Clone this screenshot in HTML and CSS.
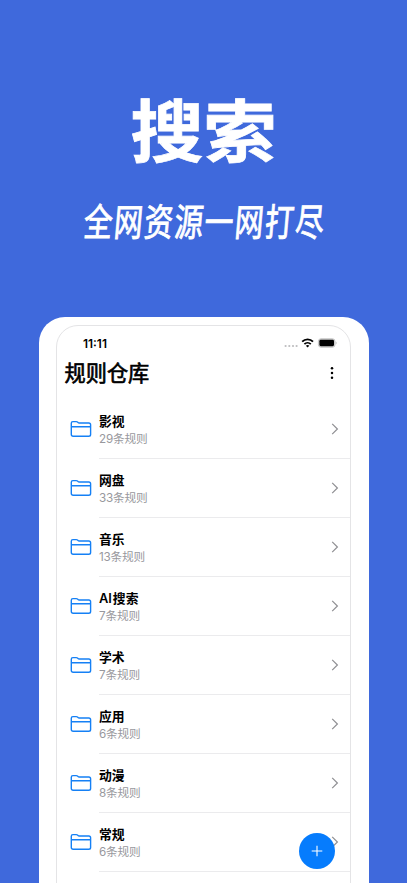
FILE: index.html
```html
<!DOCTYPE html>
<html lang="zh-CN">
<head>
<meta charset="utf-8">
<title>搜索</title>
<link rel="stylesheet" href="styles.css">
</head>
<body>
<header class="hero">
  <h1 class="hero-title">搜索</h1>
  <p class="hero-tagline"><span>全网资源一网打尽</span></p>
</header>
<main class="device">
  <div class="screen">
    <div class="status">
      <span class="time">11:11</span>
      <svg class="status-icons" width="54" height="12" viewBox="0 0 54 12">
        <g fill="#bdbdbf"><circle cx="2.6" cy="9" r="1.1"/><circle cx="6.3" cy="9" r="1.1"/><circle cx="10" cy="9" r="1.1"/><circle cx="13.6" cy="9" r="1.1"/></g>
        <g fill="none" stroke="#000" stroke-width="1.8"><path d="M19.2 4.7a7.3 7.3 0 0 1 10.8 0"/><path d="M21.4 7.2a4.6 4.6 0 0 1 6.4 0"/></g>
        <path d="M22.9 8.7a2.5 2.5 0 0 1 3.4 0l-1.7 1.7z"/>
        <rect x="35.4" y="1.8" width="16.6" height="8.4" rx="2.6" fill="#d4d4d4" stroke="#c4c4c4"/>
        <rect x="36.4" y="2.8" width="14.6" height="6.4" rx="1.4"/>
        <path d="M52.9 4.6q1.2 1.5 0 3z" fill="#a8a8a8"/>
      </svg>
    </div>
    <div class="heading">
      <h2>规则仓库</h2>
      <svg width="4" height="14" viewBox="0 0 4 14"><circle cx="2" cy="2.3" r="1.25"/><circle cx="2" cy="7" r="1.25"/><circle cx="2" cy="11.7" r="1.25"/></svg>
    </div>
    <ul class="list" id="list"></ul>
  </div>
</main>
<button class="add" aria-label="添加"><svg width="12" height="12" viewBox="0 0 12 12"><path d="M6 .7v10.6M.7 6h10.6" stroke="#fff" stroke-width="1.1"/></svg></button>
<script src="app.js"></script>
</body>
</html>
```
FILE: styles.css
```css
* { box-sizing: border-box; }
body {
  margin: 0;
  height: 883px;
  overflow: hidden;
  position: relative;
  display: flex;
  flex-direction: column;
  background: #3f69dc;
  color: #000;
  font-family: Inter, "Noto Sans CJK SC", sans-serif;
}
h1, h2, p, ul { margin: 0; padding: 0; }
.hero {
  height: 317px;
  flex: none;
  padding-top: 88px;
  color: #fff;
  text-align: center;
  font-family: "Noto Sans CJK SC", sans-serif;
}
.hero-title {
  font-size: 73px;
  line-height: 80px;
  font-weight: 700;
  -webkit-text-stroke: .8px #fff;
  transform: translateY(-1px) scaleY(.94);
}
.hero-tagline {
  display: flex;
  justify-content: center;
  margin-top: 28px;
  font-size: 38px;
  line-height: 48px;
  font-weight: 400;
  letter-spacing: 2px;
  -webkit-text-stroke: .9px #fff;
  white-space: nowrap;
}
.hero-tagline span { transform: translateX(2px) skewX(-5deg) scaleX(.755); }
.device {
  flex: none;
  width: 330.5px;
  height: 600px;
  margin-left: 38.5px;
  padding: 8px 18px 0 17.5px;
  border-radius: 26px 26px 0 0;
  background: #fff;
}
.screen {
  height: 600px;
  border: 1px solid #e4e4e6;
  border-radius: 22px 22px 0 0;
}
.status {
  height: 33px;
  padding: 0 13px 0 26px;
  display: flex;
  align-items: center;
  justify-content: space-between;
}
.time { font-size: 11.9px; line-height: 16px; font-weight: 600; padding-top: 2px; }
.heading {
  height: 28px;
  padding: 0 16px 0 7.5px;
  display: flex;
  align-items: center;
  justify-content: space-between;
}
.heading h2 { font-size: 21.2px; line-height: 28px; font-weight: 400; -webkit-text-stroke: .65px #000; }
.list { list-style: none; margin-top: 13px; }
.row {
  height: 59px;
  padding-left: 13px;
  display: flex;
  align-items: center;
}
.folder { width: 22px; height: 18px; flex: none; margin: 0 7px 1px 0; }
.content {
  flex: 1;
  height: 59px;
  padding-right: 11px;
  display: flex;
  align-items: center;
  justify-content: space-between;
  border-bottom: 1px solid #ebebed;
}
.text { padding-top: 4px; }
.name { font-size: 12.8px; line-height: 16px; font-weight: 700; }
.latin { margin-right: 1px; font-weight: 600; }
.count { font-size: 11.7px; line-height: 18px; color: #98989d; letter-spacing: -.2px; }
.add {
  position: absolute;
  left: 299px;
  top: 833px;
  width: 36px;
  height: 36px;
  padding: 0;
  border: 0;
  border-radius: 50%;
  display: flex;
  align-items: center;
  justify-content: center;
  background: #067cfd;
}
```
FILE: app.js
```js
const groups = [["影视", 29], ["网盘", 33], ["音乐", 13], ['<span class="latin">AI</span>搜索', 7], ["学术", 7], ["应用", 6], ["动漫", 8], ["常规", 6]];
document.getElementById("list").innerHTML = groups.map(([name, count]) => `
  <li class="row">
    <svg class="folder" viewBox="0 0 22 18" fill="none" stroke="#1580f5" stroke-width="1.4" stroke-linejoin="round">
      <path d="M1.3 14.5V3.2Q1.3 1.6 2.9 1.6H6.2Q7 1.6 7.5 2.1L8 2.6Q8.4 3 9.2 3H18.8Q20.6 3 20.6 4.8V14.5Q20.6 16.3 18.8 16.3H3.1Q1.3 16.3 1.3 14.5ZM1.3 6.7H20.6"/>
    </svg>
    <div class="content">
      <div class="text"><div class="name">${name}</div><div class="count">${count}条规则</div></div>
      <svg width="8" height="12" viewBox="0 0 8 12" fill="none" stroke="#8e8e92" stroke-width="1.2"><path d="M1.2 .9l5.2 5.1-5.2 5.1"/></svg>
    </div>
  </li>`).join("");
```
